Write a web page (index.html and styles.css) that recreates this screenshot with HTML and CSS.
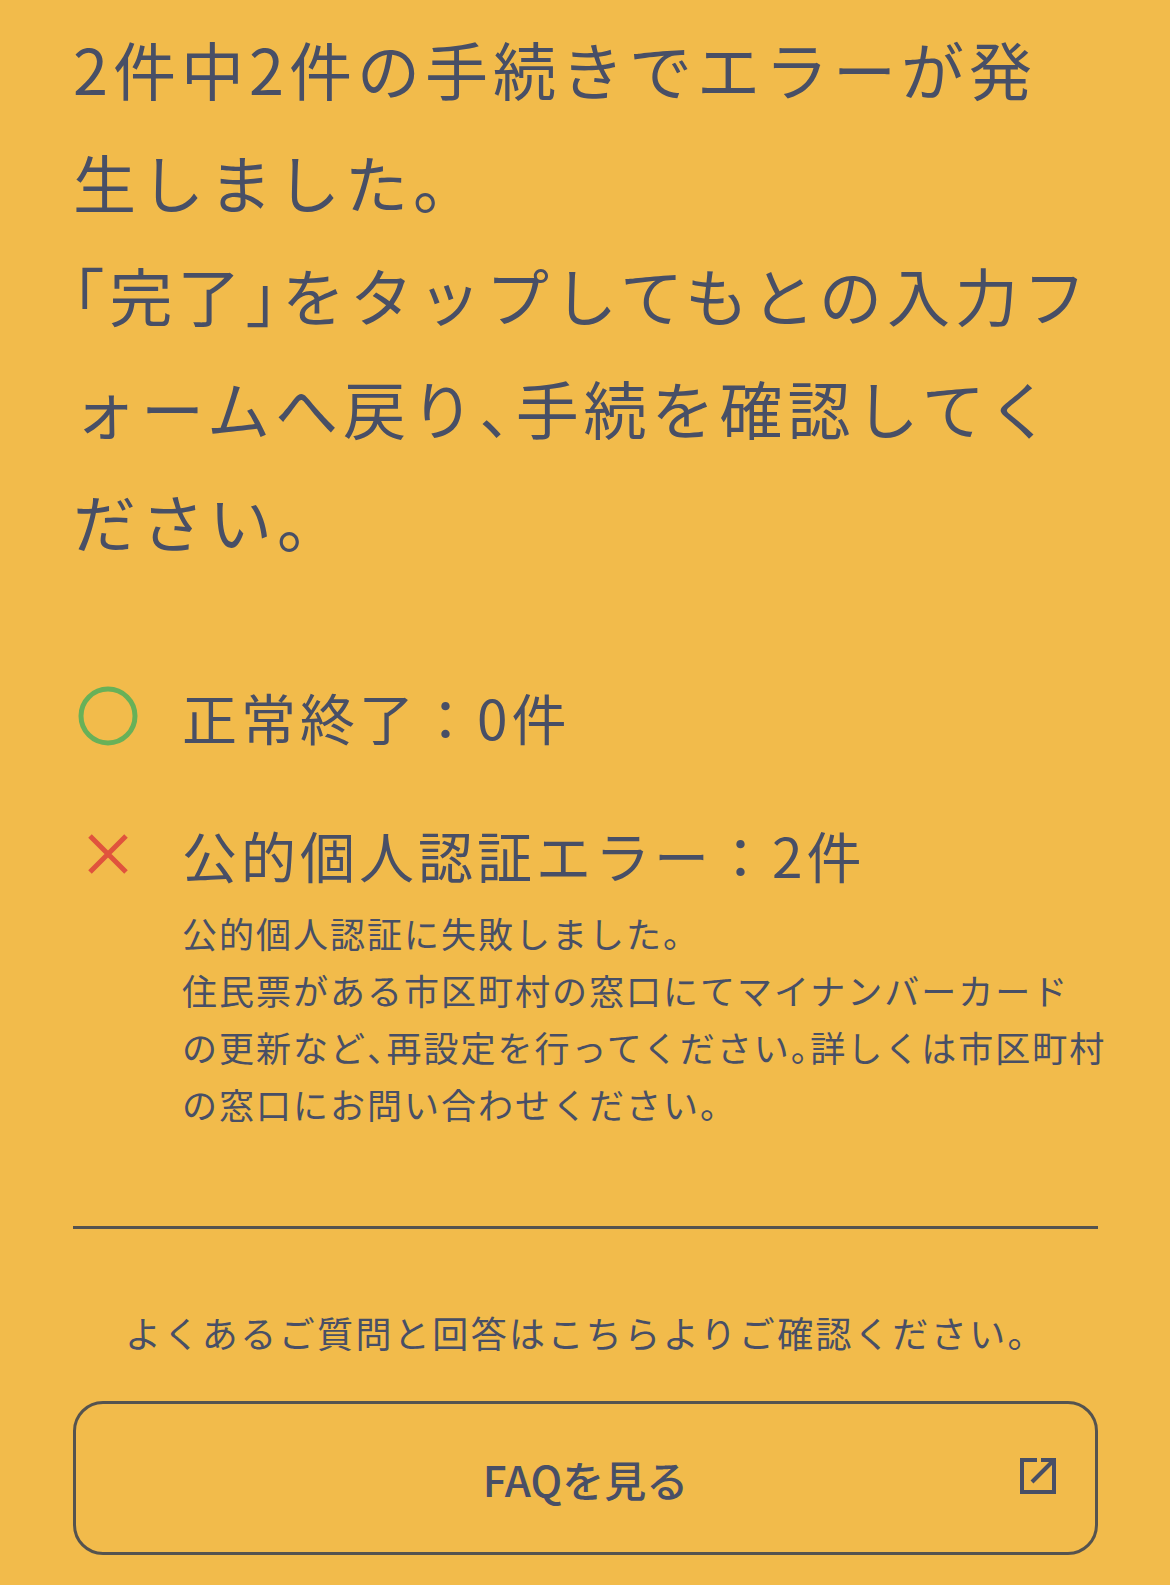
FILE: index.html
```html
<!DOCTYPE html>
<html lang="ja">
<head>
  <meta charset="UTF-8">
  <meta name="viewport" content="width=device-width, initial-scale=1.0">
  <title>手続き結果</title>
  <link rel="stylesheet" href="styles.css">
</head>
<body>

  <div class="page">
    <h1 class="lead">2件中2件の手続きでエラーが発<br>生しました。<br><span class="halt">「</span>完了<span class="halt">」</span>をタップしてもとの入力フ<br>ォームへ戻り<span class="halt">、</span>手続を確認してく<br>ださい。</h1>

    <ul class="results">
      <li class="result">
        <div class="result-mark">
          <svg width="60" height="60" viewBox="0 0 60 60"><circle cx="30" cy="30" r="27" fill="none" stroke="#68b158" stroke-width="5"/></svg>
        </div>
        <div class="result-label">正常終了：0件</div>
      </li>
      <li class="result">
        <div class="result-mark">
          <svg width="42" height="42" viewBox="0 0 42 42"><path d="M3 3L39 39M39 3L3 39" stroke="#e0533d" stroke-width="5" fill="none"/></svg>
        </div>
        <div class="result-label">公的個人認証エラー：2件</div>
        <p class="result-note">公的個人認証に失敗しました。<br>住民票がある市区町村の窓口にてマイナンバーカード<br>の更新など<span class="halt">、</span>再設定を行ってください<span class="halt">。</span>詳しくは市区町村<br>の窓口にお問い合わせください。</p>
      </li>
    </ul>

    <hr class="divider">

    <p class="faq-note">よくあるご質問と回答はこちらよりご確認ください。</p>

    <a class="faq-button" href="#">
      FAQを見る
      <svg class="ext-icon" width="36" height="36" viewBox="0 0 36 36">
        <path d="M17 2H2V34H34V2" fill="none" stroke="#484f66" stroke-width="4"/>
        <path d="M21 2H34V14" fill="none" stroke="#484f66" stroke-width="4"/>
        <path d="M33 3L12 24" fill="none" stroke="#484f66" stroke-width="4"/>
      </svg>
    </a>
  </div>

</body>
</html>
```

FILE: styles.css
```css
body {
  margin: 0; background-color: #f2bb4b; color: #484f66;
  font-family: "Noto Sans CJK JP", sans-serif;
}
.page { padding: 11px 72px 30px 73px; }
.lead {
  margin: 0; font-size: 63px; font-weight: 400; line-height: 113px;
  letter-spacing: 5px; white-space: nowrap;
}
.halt { font-feature-settings: "halt"; }

.results {
  list-style: none; margin: 98px 0 0; padding: 0;
  display: flex; flex-direction: column; gap: 54px;
}
.result {
  display: grid; grid-template-columns: 70px 1fr; column-gap: 39px;
}
.result-mark {
  height: 84px; display: flex; align-items: center; justify-content: center;
}
.result-label { font-size: 55px; line-height: 84px; letter-spacing: 4px; }
.result-note {
  grid-column: 2; margin: 8px 0 0; font-size: 35px; line-height: 57px;
  letter-spacing: 2px; white-space: nowrap;
}

.divider {
  border: none; height: 3px; background: #55534f; margin: 94px 0 0;
}
.faq-note {
  margin: 75px 0 0; font-size: 36px; line-height: 57px;
  letter-spacing: 2.4px; text-align: center;
}
.faq-button {
  position: relative; box-sizing: border-box; height: 154px; margin-top: 40px;
  display: flex; align-items: center; justify-content: center;
  border: 3px solid #55534f; border-radius: 30px;
  color: #484f66; text-decoration: none; font-size: 42px; font-weight: 500;
}
.ext-icon { position: absolute; right: 39px; top: 54px; }
```
